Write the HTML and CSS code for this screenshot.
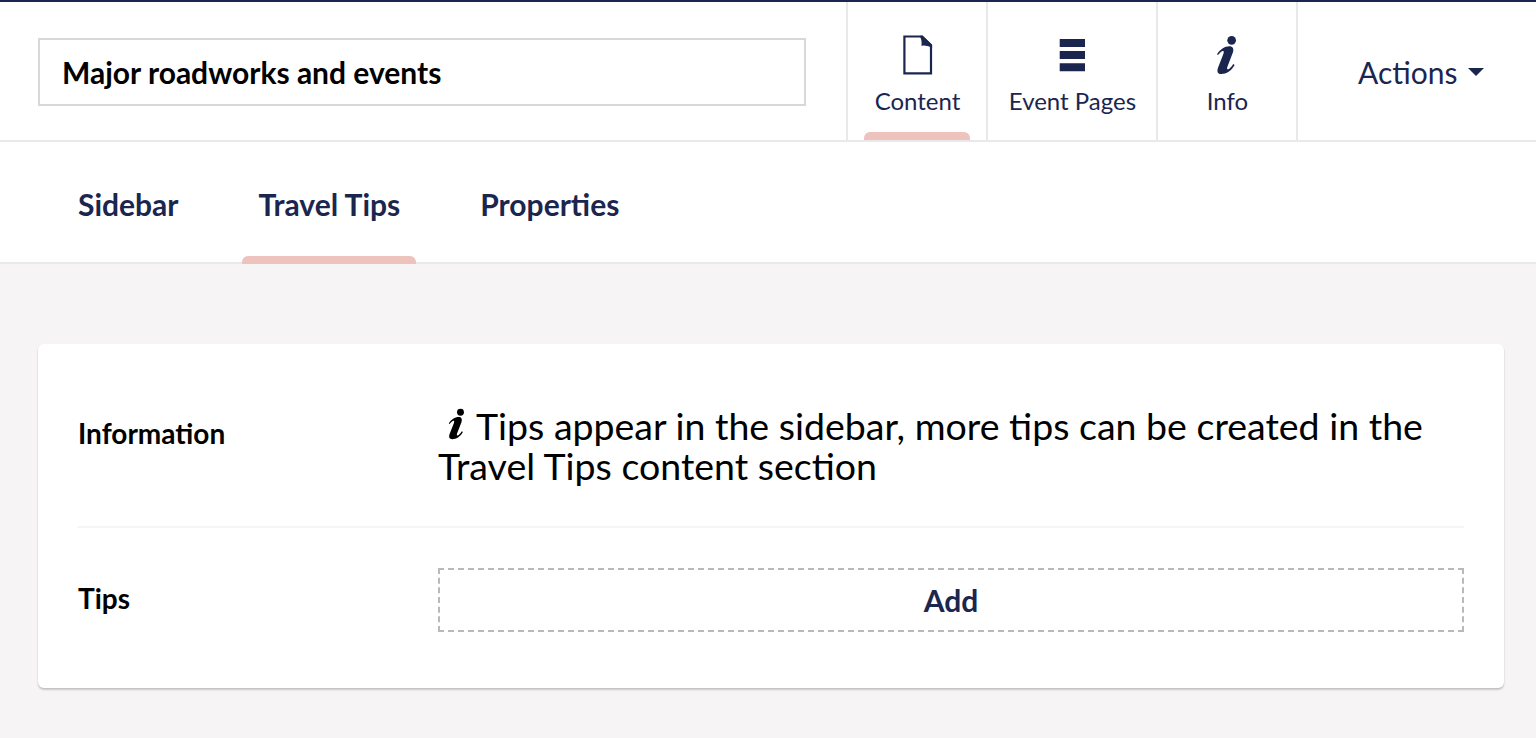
FILE: index.html
```html
<!DOCTYPE html>
<html lang="en">
<head>
<meta charset="utf-8">
<title>Major roadworks and events</title>
<link rel="stylesheet" href="styles.css">
</head>
<body>
<svg width="0" height="0" class="sprite">
  <symbol id="info" viewBox="0 0 64 120">
    <circle cx="47" cy="16" r="13"/>
    <path d="M3 58C12 44 26 34 40 34C51 34 54 42 51 52L34 96C32 103 35 105 40 101C45 97 49 92 52 87L56 90C46 108 31 117 16 117C5 117 2 110 6 98L22 57C25 49 23 46 18 49C13 52 10 56 6 60Z"/>
  </symbol>
</svg>
<header class="header">
  <div class="name"><input class="name-input" type="text" value="Major roadworks and events"></div>
  <nav class="apps">
    <a class="app app-active">
      <svg class="app-icon" width="40" height="40" viewBox="0 0 40 40"><path fill="none" stroke="currentColor" stroke-width="2.200" d="M7.400 1.500H25L34 10.200V38.300H7.400Z"/><path fill="currentColor" d="M25.400 .4L35.100 9.700V13Q31 9.800 24.400 10.700Q25.400 5 22.500 1Z"/></svg>
      <span>Content</span>
    </a>
    <a class="app app-wide">
      <svg class="app-icon" width="40" height="40" viewBox="0 0 40 40"><path fill="currentColor" d="M7.700 4h25.300v8H7.700zM7.700 16h25.300v8H7.700zM7.700 28.200h25.300v8H7.700z"/></svg>
      <span>Event Pages</span>
    </a>
    <a class="app">
      <svg class="app-icon info-icon" width="21.300" height="40"><use href="#info"/></svg>
      <span>Info</span>
    </a>
  </nav>
  <div class="actions"><span>Actions</span><i class="caret"></i></div>
</header>
<nav class="tabs">
  <a class="tab">Sidebar</a>
  <a class="tab tab-active">Travel Tips</a>
  <a class="tab">Properties</a>
</nav>
<main class="panel">
  <section class="row row-info">
    <div class="label">Information</div>
    <div class="message"><svg class="message-icon" width="17" height="32"><use href="#info"/></svg>Tips appear in the sidebar, more tips can be created in the Travel Tips content section</div>
  </section>
  <section class="row row-tips">
    <div class="label">Tips</div>
    <button class="add">Add</button>
  </section>
</main>
</body>
</html>
```
FILE: styles.css
```css
* { box-sizing: border-box; }
body {
  margin: 0;
  height: 738px;
  overflow: hidden;
  background: #f6f4f5;
  color: #000;
  font-family: Lato, "Liberation Sans", sans-serif;
}
.sprite { display: block; position: absolute; }
.header {
  display: flex;
  height: 142px;
  background: #fff;
  border-top: 2px solid #1b264f;
  border-bottom: 2px solid #e9e9eb;
  color: #1b264f;
}
.name { width: 846px; padding: 36px 40px 0 38px; }
.name-input {
  display: block;
  width: 768px;
  height: 68px;
  padding: 0 22px;
  border: 2px solid #d8d7d9;
  background: #fff;
  color: #000;
  font: bold 30px Lato, "Liberation Sans", sans-serif;
}
.apps { display: flex; border-right: 2px solid #e9e9eb; }
.app {
  position: relative;
  display: flex;
  flex-direction: column;
  align-items: center;
  width: 140px;
  padding: 33px 0 0 1px;
  border-left: 2px solid #e9e9eb;
  font-size: 24px;
  line-height: 30px;
  white-space: nowrap;
}
.app-wide { width: 170px; }
.app-icon { display: block; margin: 0 1.5px 11px 0; }
.info-icon { fill: currentColor; }
.app-active::after, .tab-active::after {
  content: "";
  position: absolute;
  left: 16px;
  right: 16px;
  bottom: 0;
  height: 8px;
  border-radius: 6px 6px 0 0;
  background: #eec3be;
}
.actions {
  display: flex;
  align-items: center;
  padding: 2px 0 0 60px;
  font-size: 30px;
}
.caret {
  margin: -1px 0 0 11px;
  border: 8px solid transparent;
  border-top-color: #1b264f;
  border-bottom: 0;
}
.tabs {
  display: flex;
  gap: 48px;
  height: 122px;
  padding-left: 62px;
  background: #fff;
  border-bottom: 2px solid #e9e9eb;
}
.tab {
  position: relative;
  height: 122px;
  padding: 0 16px;
  color: #1b264f;
  font-size: 30px;
  font-weight: bold;
  line-height: 125px;
}
.tab-active::after { left: -.5px; right: 0; }
.panel {
  width: 1466px;
  height: 344px;
  margin: 80px 0 0 38px;
  padding: 0 40px;
  border-radius: 6px;
  background: #fff;
  box-shadow: 0 2px 2px rgba(0, 0, 0, .16), 0 1px 2px rgba(0, 0, 0, .08);
}
.row { display: flex; }
.row-info { height: 184px; padding-top: 62px; border-bottom: 2px solid #f6f4f5; }
.row-tips { padding-top: 40px; }
.label { width: 360px; flex: none; font-size: 28px; font-weight: bold; line-height: 34px; }
.row-info .label { padding-top: 10px; }
.row-tips .label { padding-top: 13px; }
.message { width: 1026px; font-size: 37.5px; line-height: 40px; }
.message-icon { margin: 0 11px 0 10px; vertical-align: 0; }
.add {
  width: 1026px;
  height: 64px;
  padding: 0;
  border: 2px dashed #b9b8bc;
  background: #fff;
  color: #1b264f;
  font: bold 30px Lato, "Liberation Sans", sans-serif;
}
```
